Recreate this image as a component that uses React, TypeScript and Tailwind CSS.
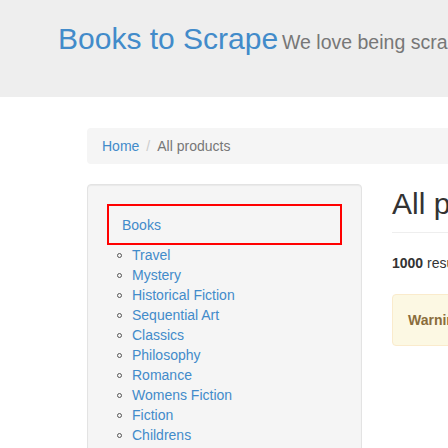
const categories = [
  'Travel',
  'Mystery',
  'Historical Fiction',
  'Sequential Art',
  'Classics',
  'Philosophy',
  'Romance',
  'Womens Fiction',
  'Fiction',
  'Childrens',
];

export default function App() {
  return (
    <div className="w-[448px] h-[448px] overflow-hidden bg-white text-[#333333] text-[14px] leading-[20px] font-['Liberation_Sans',Arial,sans-serif]">
      <header className="h-[97px] bg-[#eeeeee] pl-[58px] pt-[22px] whitespace-nowrap">
        <a href="#" className="text-[30px] leading-[33px] text-[#428bca]">Books to Scrape</a>{' '}
        <span className="text-[19.5px] text-[#777777]">We love being scraped!</span>
      </header>

      <div className="w-[1200px] pl-[87px] pt-[31px]">
        <ul className="flex items-center h-[36px] px-[15px] bg-[#f5f5f5] rounded">
          <li><a href="#" className="text-[#428bca]">Home</a></li>
          <li className="px-[7px] text-[#cccccc]">/</li>
          <li className="text-[#777777]">All products</li>
        </ul>

        <div className="flex mt-[20px] gap-[30px]">
          <aside className="w-[275px] shrink-0 h-[400px] bg-[#f5f5f5] border border-[#e3e3e3] rounded p-[19px] shadow-[inset_0_1px_1px_rgba(0,0,0,0.05)]">
            <div className="h-[41px] border-2 border-[#ff0000] flex items-center pl-[13px]">
              <a href="#" className="text-[#428bca]">Books</a>
            </div>
            <ul>
              {categories.map((c) => (
                <li key={c} className="flex items-center h-[20px]">
                  <span className="ml-[10px] w-[5px] h-[5px] rounded-full border border-[#555555] shrink-0" />
                  <a href="#" className="ml-[10px] text-[#428bca]">{c}</a>
                </li>
              ))}
            </ul>
          </aside>

          <main className="w-[800px] pt-[3px] whitespace-nowrap">
            <h1 className="text-[30px] leading-[33px] pb-[12px] border-b border-[#eeeeee]">All products</h1>
            <p className="mt-[20px]">
              <strong>1000</strong> results - showing <strong>1</strong> to <strong>20</strong>.
            </p>
            <div className="mt-[21px] p-[15px] bg-[#fcf8e3] border border-[#faebcc] rounded text-[#8a6d3b]">
              <strong>Warning!</strong> This is a demo website for web scraping purposes. Prices and ratings here were randomly assigned and have no real meaning.
            </div>
          </main>
        </div>
      </div>
    </div>
  );
}
